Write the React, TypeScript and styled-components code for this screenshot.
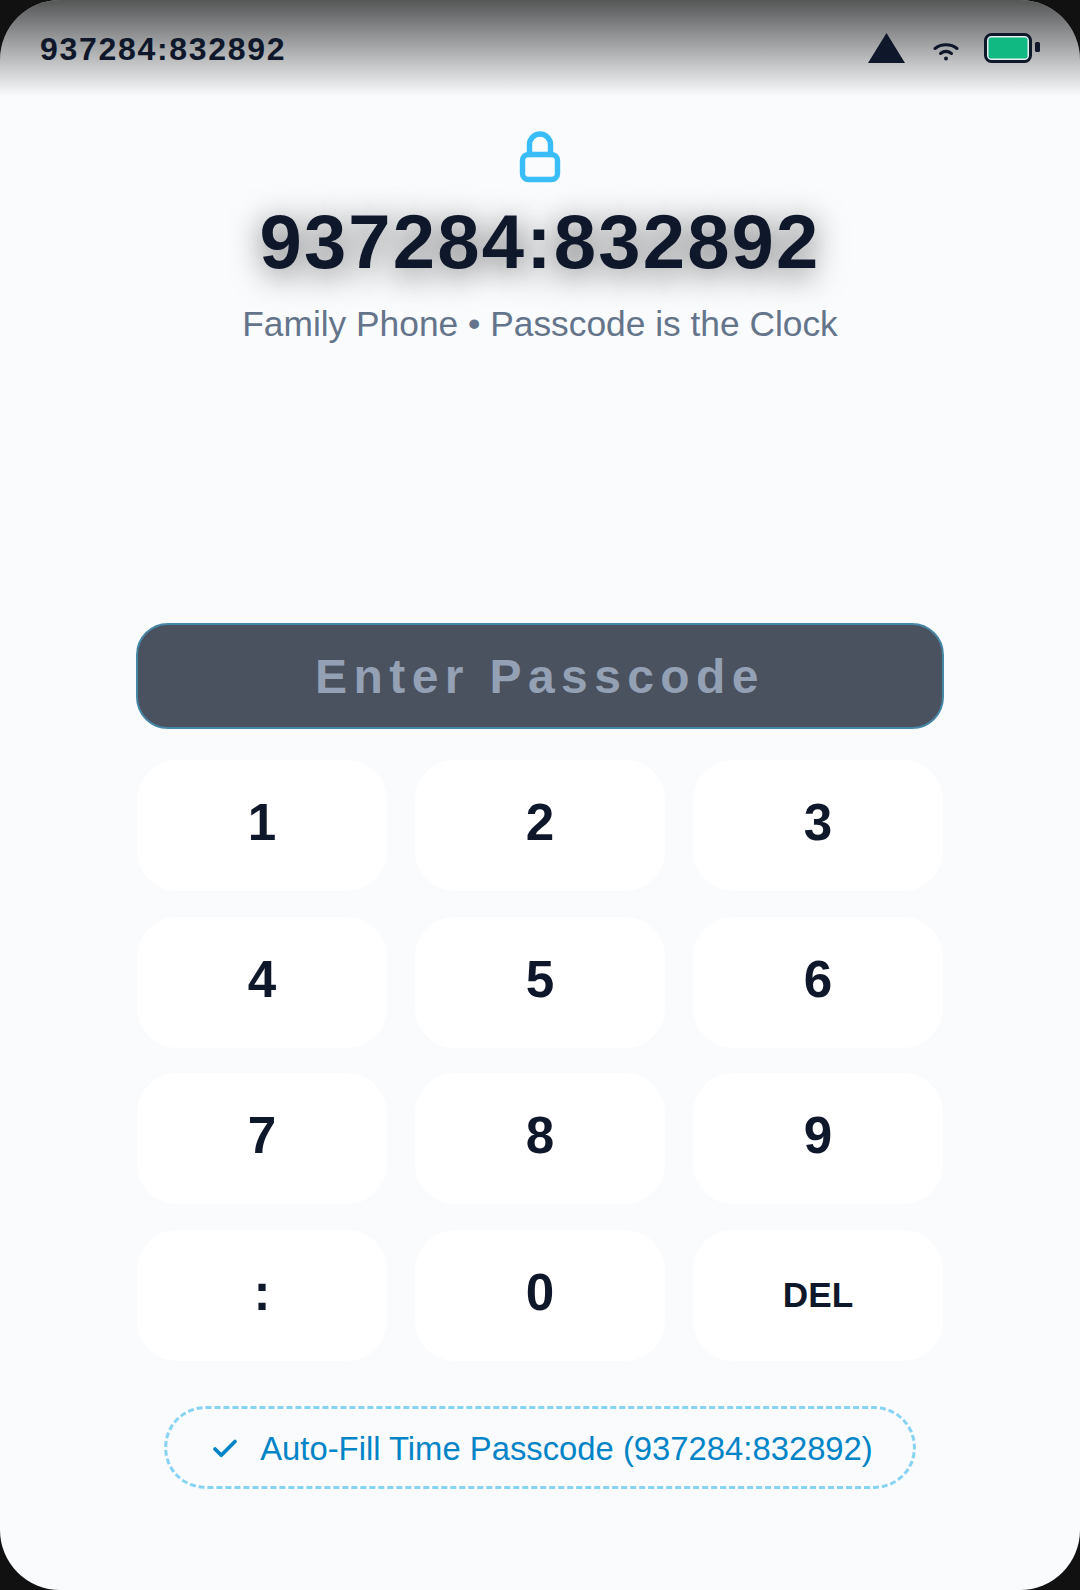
import React from 'react';
import styled, { createGlobalStyle } from 'styled-components';

const GlobalStyle = createGlobalStyle`
  html, body {
    margin: 0;
    padding: 0;
    background: #111;
  }
`;

const Screen = styled.div`
  width: 1080px;
  height: 1590px;
  background: #f9fbfd;
  border-radius: 60px;
  overflow: hidden;
  display: flex;
  flex-direction: column;
  align-items: center;
  font-family: "Liberation Sans", Arial, sans-serif;
  color: #0f172a;
`;

const StatusBar = styled.div`
  width: 100%;
  height: 96px;
  box-sizing: border-box;
  padding: 2px 40px 0;
  display: flex;
  align-items: center;
  justify-content: space-between;
  background: linear-gradient(to bottom, rgba(0, 0, 0, 0.66), rgba(0, 0, 0, 0));
`;

const StatusTime = styled.div`
  font-size: 32px;
  font-weight: 700;
  letter-spacing: 1.7px;
`;

const StatusIcons = styled.div`
  display: flex;
  align-items: center;
  gap: 25px;
  margin-bottom: 2px;
`;

const SignalIcon = styled.svg`
  display: block;
  margin-right: 3px;
`;

const WifiIcon = styled.svg`
  display: block;
  margin-top: 7px;
`;

const BatteryIcon = styled.svg`
  display: block;
`;

const Header = styled.div`
  display: flex;
  flex-direction: column;
  align-items: center;
  padding-top: 30px;
`;

const LockIcon = styled.svg`
  width: 62px;
  height: 62px;
  display: block;
`;

const Clock = styled.div`
  margin-top: 12px;
  font-size: 76px;
  line-height: 83px;
  font-weight: 700;
  letter-spacing: 2.2px;
  text-shadow: 0 6px 32px rgba(0, 0, 0, 0.6);
`;

const Subtitle = styled.div`
  margin-top: 20px;
  font-size: 35.35px;
  line-height: 42px;
  color: #64748b;
`;

const PasscodeBox = styled.div`
  margin-top: 278px;
  width: 808px;
  height: 106px;
  box-sizing: border-box;
  border: 2.5px solid #4686a6;
  border-radius: 32px;
  background: #4a515f;
  display: flex;
  align-items: center;
  justify-content: center;
  font-size: 48px;
  font-weight: 700;
  letter-spacing: 6.4px;
  color: #94a0b3;
`;

const Keypad = styled.div`
  margin-top: 31px;
  width: 806px;
  display: grid;
  grid-template-columns: repeat(3, 1fr);
  grid-auto-rows: 131px;
  gap: 25.6px 28px;
`;

const Key = styled.div<{ $small?: boolean }>`
  background: #ffffff;
  border-radius: 40px;
  display: flex;
  align-items: center;
  justify-content: center;
  font-size: ${(p) => (p.$small ? '35.2px' : '51.2px')};
  font-weight: 700;
  padding-bottom: ${(p) => (p.$small ? '0' : '6px')};
  box-sizing: border-box;
`;

const AutoFill = styled.div`
  margin-top: 45px;
  width: 752px;
  height: 83px;
  box-sizing: border-box;
  padding: 3px 0 0 3px;
  border: 3px dashed #87d3f3;
  border-radius: 42px;
  display: flex;
  align-items: center;
  justify-content: center;
  gap: 20px;
  font-size: 32.8px;
  color: #0284c7;
`;

const CheckIcon = styled.svg`
  width: 30px;
  height: 30px;
  display: block;
`;

const keys = ['1', '2', '3', '4', '5', '6', '7', '8', '9', ':', '0', 'DEL'];

const App: React.FC = () => {
  return (
    <>
      <GlobalStyle />
      <Screen>
        <StatusBar>
          <StatusTime>937284:832892</StatusTime>
          <StatusIcons>
            <SignalIcon width="37" height="30" viewBox="0 0 37 30">
              <path d="M18.5 0 L37 30 H0 Z" fill="#0f172a" />
            </SignalIcon>
            <WifiIcon width="26" height="18" viewBox="0 0 26 18" fill="none" stroke="#0f172a" strokeWidth="3" strokeLinecap="round">
              <path d="M2 5.5 C8 0.5 18 0.5 24 5.5" />
              <path d="M7.5 10.5 C11 7.8 15 7.8 18.5 10.5" />
              <circle cx="13" cy="15.5" r="2" fill="#0f172a" stroke="none" />
            </WifiIcon>
            <BatteryIcon width="56" height="30" viewBox="0 0 56 30">
              <rect x="1.5" y="1.5" width="45" height="27" rx="6" fill="#e8edf2" stroke="#0f172a" strokeWidth="3" />
              <rect x="4.5" y="4.5" width="39" height="21" rx="2.5" fill="#10b981" />
              <rect x="51" y="9" width="5" height="10" rx="1.5" fill="#0f172a" />
            </BatteryIcon>
          </StatusIcons>
        </StatusBar>
        <Header>
          <LockIcon viewBox="0 0 62 62" fill="none" stroke="#38bdf8" strokeWidth="5.4" strokeLinecap="round" strokeLinejoin="round">
            <rect x="13.5" y="28.5" width="35" height="25" rx="6" />
            <path d="M20.5 28.5V18.5a10.5 10.5 0 0 1 21 0v10" />
          </LockIcon>
          <Clock>937284:832892</Clock>
          <Subtitle>Family Phone • Passcode is the Clock</Subtitle>
        </Header>
        <PasscodeBox>Enter Passcode</PasscodeBox>
        <Keypad>
          {keys.map((k) => (
            <Key key={k} $small={k === 'DEL'}>
              {k}
            </Key>
          ))}
        </Keypad>
        <AutoFill>
          <CheckIcon viewBox="0 0 24 24" fill="none" stroke="#0284c7" strokeWidth="3" strokeLinecap="round" strokeLinejoin="round">
            <path d="M20 6 9 17l-5-5" />
          </CheckIcon>
          Auto-Fill Time Passcode (937284:832892)
        </AutoFill>
      </Screen>
    </>
  );
};

export default App;
